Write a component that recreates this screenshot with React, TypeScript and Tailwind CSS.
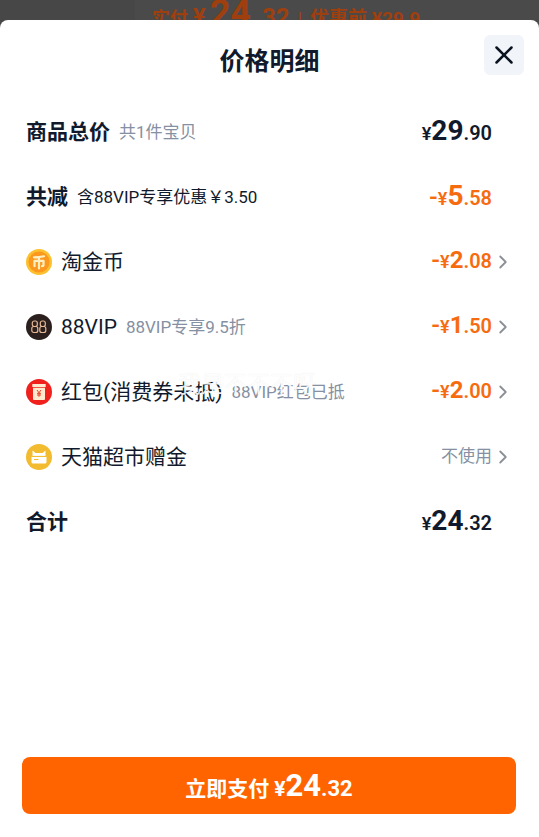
import React from "react";
import { ChevronRight, X } from "lucide-react";

type Row = {
  label: string;
  note?: string;
  price?: string;
  text?: string;
  icon?: React.ReactNode;
  minus?: boolean;
  darkNote?: boolean;
  mark?: string;
};

const CoinIcon = () => (
  <svg viewBox="0 0 26 26" className="size-[26px] shrink-0" fill="none" aria-hidden="true">
    <circle cx="13" cy="13" r="13" fill="#fdc02f" />
    <circle cx="13" cy="13" r="10.5" fill="#fb981d" />
    <path d="M8 8.300c3.500 0 7-.3 10-1M13 8v11.500M8.500 17.200v-5.400h9v4.400c0 .8-.5 1-1.500 1" stroke="#fff0c4" strokeWidth="2.200" strokeLinecap="round" strokeLinejoin="round" />
  </svg>
);

const VipIcon = () => (
  <svg viewBox="0 0 26 26" className="size-[26px] shrink-0" fill="none" aria-hidden="true">
    <circle cx="13" cy="13" r="13" fill="#2b201d" />
    <g stroke="#e6b896" strokeWidth="1.200">
      <rect x="6.300" y="7" width="5" height="5.500" rx="2" />
      <rect x="5.800" y="12.500" width="6" height="6" rx="2" />
      <rect x="14.300" y="7" width="5" height="5.500" rx="2" />
      <rect x="13.800" y="12.500" width="6" height="6" rx="2" />
    </g>
  </svg>
);

const RedPacketIcon = () => (
  <svg viewBox="0 0 26 26" className="size-[26px] shrink-0" fill="none" aria-hidden="true">
    <circle cx="13" cy="13" r="13" fill="#f0201c" />
    <path d="M6.300 5h13.400v3H6.300z" fill="#ffe9cf" />
    <path d="M7 8.700h12v11.300a1 1 0 0 1-1 1H8a1 1 0 0 1-1-1z" fill="#ffe9cf" />
    <path d="m11 11 2 2.800 2-2.800M13 13.800v4M11 14.300h4M11 16h4" stroke="#e8402c" strokeWidth="1" />
  </svg>
);

const CatCardIcon = () => (
  <svg viewBox="0 0 26 26" className="size-[26px] shrink-0" fill="none" aria-hidden="true">
    <circle cx="13" cy="13" r="13" fill="#f3bb2f" />
    <path d="M6.500 6.500 9.500 9h7l3-2.500V12h-13z" fill="#fff" />
    <path d="M5.500 12.800h15v5.200a1.500 1.500 0 0 1-1.500 1.500H7a1.500 1.500 0 0 1-1.500-1.500z" fill="#fff" />
    <path d="M5.500 12.400h15M8 15.500h4.500" stroke="#f3bb2f" strokeWidth="1" />
  </svg>
);

const rows: Row[] = [
  { label: "商品总价", note: "共1件宝贝", price: "29.90" },
  { label: "共减", note: "含88VIP专享优惠￥3.50", price: "5.58", minus: true, darkNote: true },
  { label: "淘金币", price: "2.08", minus: true, icon: <CoinIcon /> },
  { label: "88VIP", note: "88VIP专享9.5折", price: "1.50", minus: true, icon: <VipIcon /> },
  { label: "红包(消费券未抵)", note: "88VIP红包已抵", price: "2.00", minus: true, icon: <RedPacketIcon />, mark: "我是不不不呀" },
  { label: "天猫超市赠金", text: "不使用", icon: <CatCardIcon /> },
  { label: "合计", price: "24.32" },
];

function Price({ value, minus, small }: { value: string; minus?: boolean; small?: boolean }) {
  const [whole, cents] = value.split(".");
  return (
    <span className={minus ? "pb-1 font-semibold text-[#f76b10]" : "pb-1 font-semibold"}>
      {minus && <span className="text-2xl">-</span>}
      <span className="text-lg">¥</span>
      <span className={small ? "text-2xl font-bold" : "text-[28px] font-bold"}>{whole}</span>
      <span className="text-xl">.{cents}</span>
    </span>
  );
}

function DetailRow({ row }: { row: Row }) {
  const value = row.price ? (
    <Price value={row.price} minus={row.minus} small={!!row.icon} />
  ) : (
    <span className="text-[17px] text-[#8590a3]">{row.text}</span>
  );

  return (
    <li className="relative flex h-[65px] items-center">
      {row.icon && <span className="pb-[2px]">{row.icon}</span>}
      <span className={row.icon ? "ml-[9px] text-[21px]" : "text-[21px] font-bold"}>{row.label}</span>
      {row.note && (
        <span className={row.darkNote ? "ml-[9px] text-[17px]" : "ml-[9px] text-[17px] text-[#8590a3]"}>{row.note}</span>
      )}
      {/* account watermark */}
      {row.mark && (
        <span className="pointer-events-none absolute top-2 left-[152px] text-[23px] text-white/90 [text-shadow:0_0_1px_#00000018]">
          {row.mark}
        </span>
      )}
      {row.icon ? (
        <button className="ml-auto flex items-center pb-[2px]" aria-label={row.label}>
          {value}
          <ChevronRight className="size-[22px] text-[#8b8f96]" strokeWidth={2} />
        </button>
      ) : (
        <span className="ml-auto flex pr-[22px]">{value}</span>
      )}
    </li>
  );
}

export default function App() {
  return (
    <div className="relative flex min-h-screen flex-col bg-[#4a4a4a] pt-5 font-['Roboto','Noto_Sans_CJK_SC',sans-serif] text-[#111a2c]">
      {/* order page behind the sheet */}
      <div className="absolute inset-x-0 top-0 flex" aria-hidden="true">
        <div className="h-8 w-1/4 bg-[#474747]" />
        <div className="flex items-baseline pl-[17px] font-bold whitespace-nowrap text-[#a03f0e]">
          <span className="text-lg leading-[26px]">实付</span>
          <span className="ml-[5px] text-2xl leading-[26px]">¥</span>
          <span className="ml-1 text-4xl leading-[26px]">24</span>
          <span className="ml-1 text-2xl leading-[26px]">.32</span>
          <span className="ml-2 text-lg leading-[26px]">|</span>
          <span className="ml-2 text-[19px] leading-[26px]">优惠前 ¥29.9</span>
        </div>
      </div>

      <main className="relative flex grow flex-col rounded-t-lg bg-white">
        <header className="flex h-20 items-center justify-center pt-1">
          <h1 className="text-[25px] font-bold">价格明细</h1>
          <button className="absolute top-[15px] right-[15px] flex size-10 items-center justify-center rounded-md bg-[#f1f4f8] text-[#0b1220]" aria-label="关闭">
            <X className="size-[30px]" strokeWidth={2} />
          </button>
        </header>

        <ul className="pr-[25px] pl-[26px]">
          {rows.map((row) => (
            <DetailRow key={row.label} row={row} />
          ))}
        </ul>

        <div className="mt-auto pr-[23px] pb-[23px] pl-[22px]">
          <button className="flex h-[57px] w-full items-baseline justify-center gap-[5px] rounded-lg bg-[#ff6400] font-bold text-white">
            <span className="text-[21px]">立即支付</span>
            <span className="leading-[57px]">
              <span className="text-[21px]">¥</span>
              <span className="text-[31px]">24</span>
              <span className="text-[22px]">.32</span>
            </span>
          </button>
        </div>
      </main>
    </div>
  );
}
